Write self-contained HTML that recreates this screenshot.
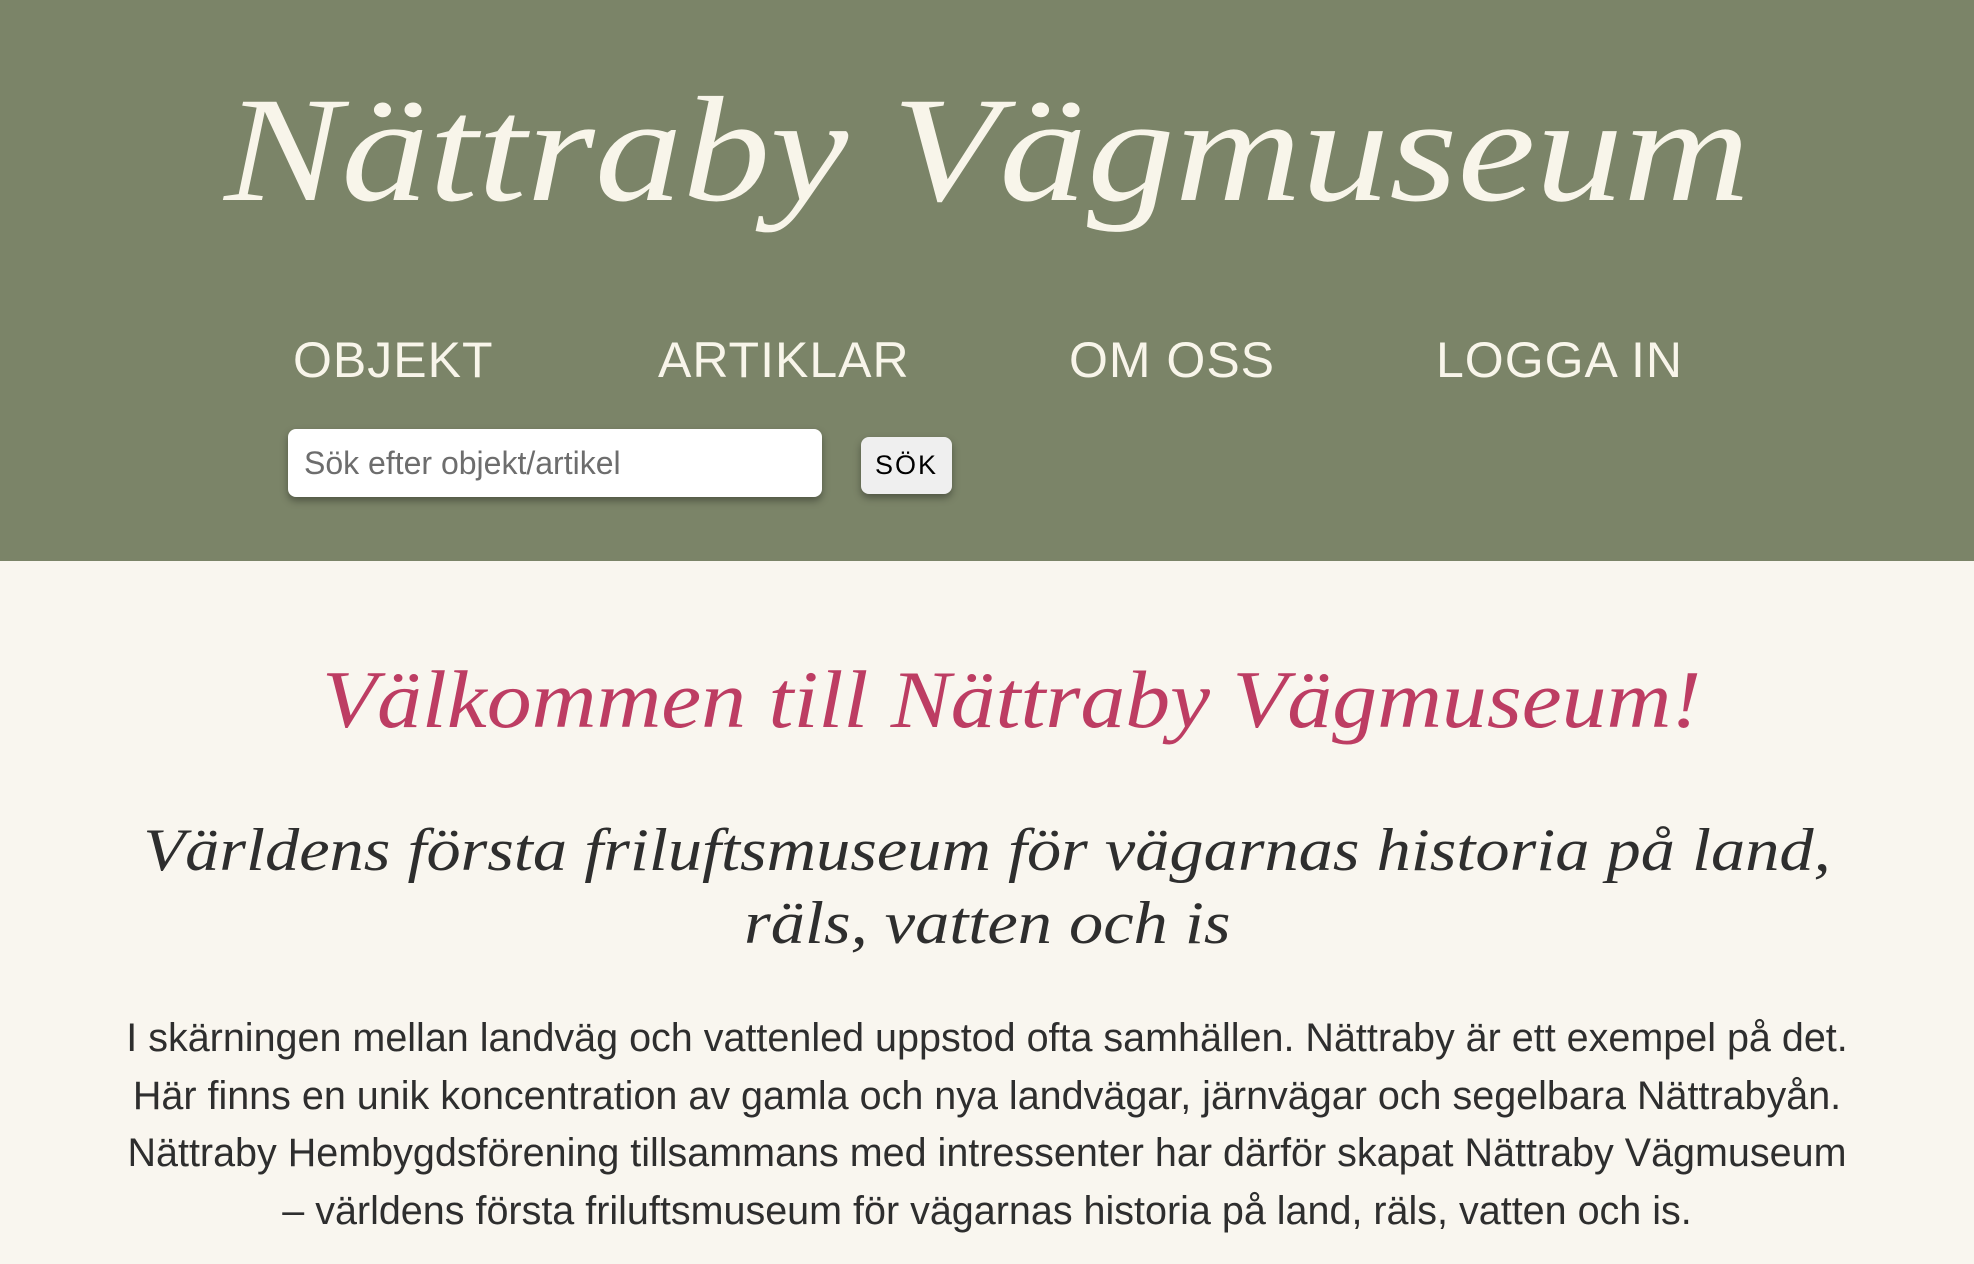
<!DOCTYPE html>
<html><head><meta charset="utf-8"><style>
html,body{margin:0;padding:0;width:1974px;height:1264px;overflow:hidden;background:#f9f6ef;}
header{position:absolute;left:0;top:0;width:1974px;height:561px;background:#7b8468;}
.title{position:absolute;left:0;width:1974px;top:60px;text-align:center;font-family:"Liberation Serif",serif;font-style:italic;font-size:150px;color:#f8f5ea;line-height:180px;white-space:nowrap;}
.title span{display:inline-block;transform:scaleX(1.17);transform-origin:center;}
.nav{position:absolute;top:328px;font-family:"Liberation Sans",sans-serif;font-size:50px;color:#f8f5ea;letter-spacing:1px;line-height:64px;white-space:nowrap;}
.inp{position:absolute;left:288px;top:429px;width:534px;height:68px;background:#fff;border-radius:8px;box-shadow:0 4px 8px rgba(0,0,0,.35);font-family:"Liberation Sans",sans-serif;font-size:32px;color:#6d6d6d;line-height:68px;padding-left:16px;box-sizing:border-box;}
.btn{position:absolute;left:861px;top:437px;width:91px;height:57px;background:#efefef;border-radius:8px;box-shadow:0 4px 8px rgba(0,0,0,.35);font-family:"Liberation Sans",sans-serif;font-size:27px;color:#000;line-height:57px;text-align:center;letter-spacing:2px;}
h1{position:absolute;margin:0;left:25px;width:1974px;top:650px;text-align:center;font-family:"Liberation Serif",serif;font-style:italic;font-weight:normal;font-size:82px;color:#bd3d63;line-height:100px;white-space:nowrap;}
h1 span{display:inline-block;transform:scaleX(1.095);}
h2 span{display:inline-block;transform:scaleX(1.14);}
h2{position:absolute;margin:0;left:0;width:1974px;top:814px;text-align:center;font-family:"Liberation Serif",serif;font-style:italic;font-weight:normal;font-size:60px;color:#2e2e2e;line-height:73px;}
p{position:absolute;margin:0;left:0;width:1974px;top:1010px;text-align:center;font-family:"Liberation Sans",sans-serif;font-size:39.5px;color:#2e2e2e;line-height:57.5px;white-space:nowrap;}
</style></head><body>
<header>
<div class="title"><span>Nättraby Vägmuseum</span></div>
<div class="nav" style="left:293px">OBJEKT</div>
<div class="nav" style="left:658px">ARTIKLAR</div>
<div class="nav" style="left:1069px">OM OSS</div>
<div class="nav" style="left:1436px">LOGGA IN</div>
<div class="inp">Sök efter objekt/artikel</div>
<div class="btn">SÖK</div>
</header>
<h1><span>Välkommen till Nättraby Vägmuseum!</span></h1>
<h2><span>Världens första friluftsmuseum för vägarnas historia på land,</span><br><span>räls, vatten och is</span></h2>
<p>I skärningen mellan landväg och vattenled uppstod ofta samhällen. Nättraby är ett exempel på det.<br>Här finns en unik koncentration av gamla och nya landvägar, järnvägar och segelbara Nättrabyån.<br>Nättraby Hembygdsförening tillsammans med intressenter har därför skapat Nättraby Vägmuseum<br>– världens första friluftsmuseum för vägarnas historia på land, räls, vatten och is.</p>
</body></html>
